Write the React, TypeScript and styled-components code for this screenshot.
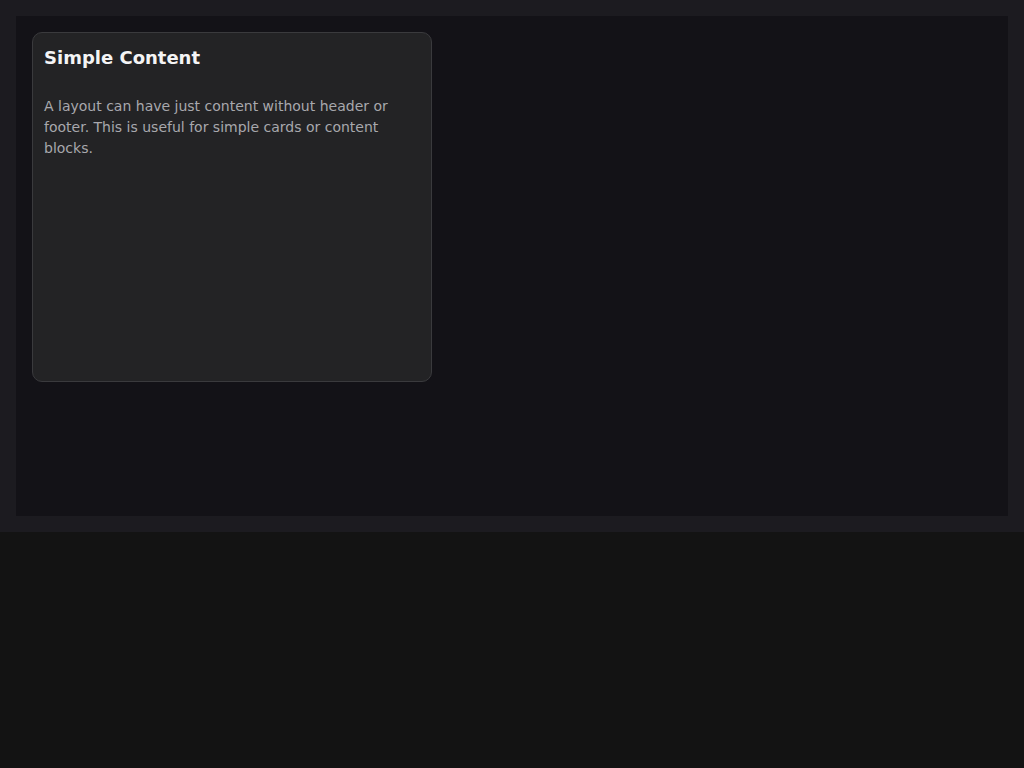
import styled, { createGlobalStyle } from "styled-components"

const GlobalStyle = createGlobalStyle`
  html, body {
    margin: 0;
    padding: 0;
    background: #131313;
    font-family: "DejaVu Sans", "Noto Sans", sans-serif;
  }
`

export default function App() {
  return (
    <>
      <GlobalStyle />
      <Frame>
        <Canvas>
          <Card>
            <Title>Simple Content</Title>
            <Body>
              A layout can have just content without header or footer. This is
              useful for simple cards or content blocks.
            </Body>
          </Card>
        </Canvas>
      </Frame>
    </>
  )
}

const Frame = styled.div`
  background: #1c1b20;
  padding: 16px;
`

const Canvas = styled.div`
  background: #131217;
  height: 500px;
  padding: 16px;
  box-sizing: border-box;
`

const Card = styled.div`
  width: 400px;
  height: 350px;
  box-sizing: border-box;
  padding: 12px 11px;
  background: #232325;
  border: 1px solid #3a3a3d;
  border-radius: 10px;
`

const Title = styled.h2`
  margin: 0 0 26px;
  font-size: 18px;
  line-height: 25px;
  font-weight: 700;
  color: #f4f4f5;
`

const Body = styled.p`
  margin: 0;
  font-size: 14px;
  line-height: 21px;
  color: #a8a8ad;
`
